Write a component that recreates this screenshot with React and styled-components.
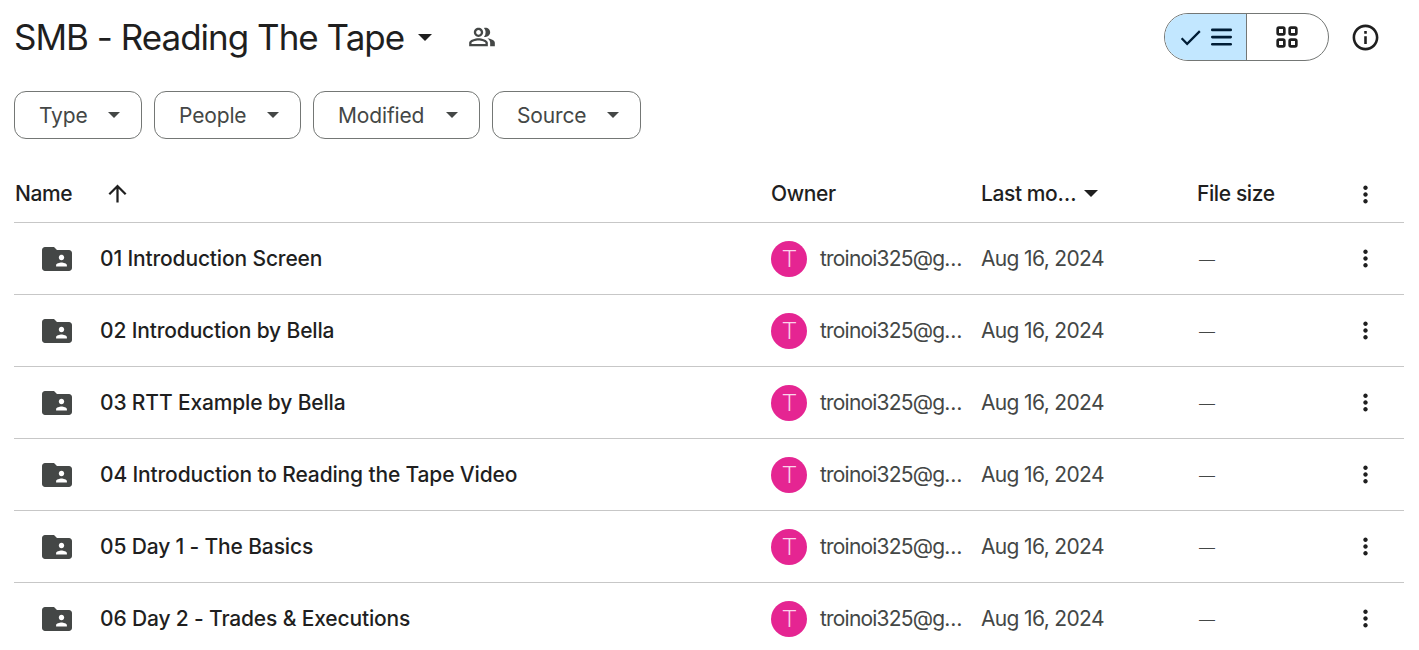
import React from 'react';
import styled, { createGlobalStyle } from 'styled-components';
import { MdOutlinePeopleAlt, MdInfoOutline, MdArrowUpward, MdMoreVert, MdCheck } from 'react-icons/md';

const GlobalStyle = createGlobalStyle`
  html, body {
    margin: 0;
    padding: 0;
    background: #fff;
    overflow: hidden;
    font-family: 'Inter', 'Roboto', sans-serif;
  }
`;

const Page = styled.div`
  width: 1419px;
  height: 650px;
  padding: 0 15px 0 14px;
  box-sizing: border-box;
  overflow: hidden;
`;

const TitleBar = styled.div`
  display: flex;
  align-items: center;
  height: 74px;
`;

const Title = styled.h1`
  margin: 0;
  font-size: 35px;
  font-weight: 400;
  color: #1f1f1f;
  letter-spacing: -1px;
  white-space: nowrap;
`;

const Caret = styled.span`
  display: inline-block;
  width: 0;
  height: 0;
  flex: none;
  border-left: ${({ $size }) => $size}px solid transparent;
  border-right: ${({ $size }) => $size}px solid transparent;
  border-top: ${({ $size }) => $size}px solid ${({ $color }) => $color};
`;

const TitleCaret = styled(Caret)`
  margin-left: 14px;
`;

const SharedIcon = styled(MdOutlinePeopleAlt)`
  margin-left: 36px;
  color: #444746;
`;

const Spacer = styled.div`
  flex: 1;
`;

const ViewToggle = styled.div`
  display: flex;
  width: 165px;
  height: 48px;
  box-sizing: border-box;
  border: 1px solid #747775;
  border-radius: 24px;
  overflow: hidden;
`;

const ListSegment = styled.div`
  width: 82px;
  display: flex;
  align-items: center;
  justify-content: center;
  gap: 7px;
  padding-right: 2px;
  background: #c2e7ff;
  border-right: 1px solid #747775;
  color: #001d35;
  box-sizing: border-box;
  flex: none;
`;

const GridSegment = styled.div`
  flex: 1;
  display: flex;
  align-items: center;
  justify-content: center;
  padding-right: 1px;
  color: #1f1f1f;
`;

const InfoButton = styled.div`
  width: 72px;
  display: flex;
  justify-content: center;
  color: #1f1f1f;
  margin-right: 3px;
`;

const Filters = styled.div`
  display: flex;
  gap: 12px;
  margin-top: 17px;
`;

const Chip = styled.div`
  display: flex;
  align-items: center;
  justify-content: space-between;
  width: ${({ $w }) => $w}px;
  height: 48px;
  box-sizing: border-box;
  padding: 0 21px 0 24px;
  border: 1px solid #747775;
  border-radius: 12px;
  font-size: 21px;
  letter-spacing: -0.15px;
  color: #444746;
`;

const Table = styled.div`
  margin-top: 27px;
`;

const Row = styled.div`
  display: grid;
  grid-template-columns: 757px 210px 216px 1fr 40px;
  align-items: center;
  height: ${({ $h }) => $h}px;
  border-bottom: 1px solid #c7c7c7;
  box-sizing: border-box;
  padding-right: 19px;
`;

const HeaderCell = styled.div`
  display: flex;
  align-items: center;
  font-size: 21px;
  font-weight: 500;
  letter-spacing: -0.4px;
  color: #1f1f1f;
  white-space: nowrap;
  margin-bottom: 2px;
`;

const NameHeader = styled(HeaderCell)`
  padding-left: 1px;
  gap: 32px;
`;

const SortCaret = styled(Caret)`
  margin-left: 8px;
`;

const NameCell = styled.div`
  display: flex;
  align-items: center;
  padding-left: 25px;
  gap: 25px;
  font-size: 21px;
  font-weight: 450;
  letter-spacing: -0.15px;
  color: #1f1f1f;
  white-space: nowrap;
`;

const OwnerCell = styled.div`
  display: flex;
  align-items: center;
  gap: 13px;
  font-size: 21px;
  letter-spacing: -0.8px;
  color: #444746;
  white-space: nowrap;
`;

const Avatar = styled.div`
  width: 36px;
  height: 36px;
  flex: none;
  border-radius: 50%;
  background: #e52592;
  color: #fbd3ea;
  display: flex;
  align-items: center;
  justify-content: center;
  font-family: 'Roboto', sans-serif;
  font-size: 24px;
  font-weight: 300;
`;

const DateCell = styled.div`
  font-size: 21px;
  letter-spacing: -0.65px;
  color: #444746;
  white-space: nowrap;
`;

const SizeCell = styled.div`
  font-size: 16px;
  font-weight: 300;
  color: #444746;
  padding-left: 2px;
`;

const MenuCell = styled.div`
  display: flex;
  justify-content: center;
  color: #1f1f1f;
`;

const FolderIcon = () => (
  <svg width="36" height="36" viewBox="0 0 24 24" fill="#444746">
    <path d="M20 6h-8l-2-2H4c-1.1 0-1.99.9-1.99 2L2 18c0 1.1.9 2 2 2h16c1.1 0 2-.9 2-2V8c0-1.1-.9-2-2-2zm-5 3.2c1 0 1.8.8 1.8 1.8s-.8 1.8-1.8 1.8-1.8-.8-1.8-1.8.8-1.8 1.8-1.8zm3.6 7.8h-7.2v-.9c0-1.2 2.4-1.8 3.6-1.8s3.6.6 3.6 1.8v.9z" />
  </svg>
);

const GridIcon = () => (
  <svg width="32" height="32" viewBox="0 0 24 24" fill="none" stroke="currentColor" strokeWidth="2">
    <rect x="5" y="5" width="5" height="5" rx="1" />
    <rect x="14" y="5" width="5" height="5" rx="1" />
    <rect x="5" y="14" width="5" height="5" rx="1" />
    <rect x="14" y="14" width="5" height="5" rx="1" />
  </svg>
);

const ListIcon = () => (
  <svg width="21" height="18" viewBox="0 0 21 18" fill="currentColor">
    <rect x="0" y="0.5" width="21" height="2.7" rx="1.3" />
    <rect x="0" y="7.7" width="21" height="2.7" rx="1.3" />
    <rect x="0" y="14.9" width="21" height="2.7" rx="1.3" />
  </svg>
);

const folders = [
  '01 Introduction Screen',
  '02 Introduction by Bella',
  '03 RTT Example by Bella',
  '04 Introduction to Reading the Tape Video',
  '05 Day 1 - The Basics',
  '06 Day 2 - Trades & Executions',
];

const filters = [
  { label: 'Type', width: 128 },
  { label: 'People', width: 147 },
  { label: 'Modified', width: 167 },
  { label: 'Source', width: 149 },
];

export default function App() {
  return (
    <Page>
      <GlobalStyle />
      <TitleBar>
        <Title>SMB - Reading The Tape</Title>
        <TitleCaret $size={7} $color="#1f1f1f" />
        <SharedIcon size={28} />
        <Spacer />
        <ViewToggle>
          <ListSegment>
            <MdCheck size={27} />
            <ListIcon />
          </ListSegment>
          <GridSegment>
            <GridIcon />
          </GridSegment>
        </ViewToggle>
        <InfoButton>
          <MdInfoOutline size={31} />
        </InfoButton>
      </TitleBar>

      <Filters>
        {filters.map((f) => (
          <Chip key={f.label} $w={f.width}>
            {f.label}
            <Caret $size={6} $color="#444746" />
          </Chip>
        ))}
      </Filters>

      <Table>
        <Row $h={57}>
          <NameHeader>
            Name
            <MdArrowUpward size={27} />
          </NameHeader>
          <HeaderCell>Owner</HeaderCell>
          <HeaderCell>
            Last mo…
            <SortCaret $size={7} $color="#1f1f1f" />
          </HeaderCell>
          <HeaderCell>File size</HeaderCell>
          <MenuCell>
            <MdMoreVert size={27} />
          </MenuCell>
        </Row>
        {folders.map((name) => (
          <Row key={name} $h={72}>
            <NameCell>
              <FolderIcon />
              {name}
            </NameCell>
            <OwnerCell>
              <Avatar>T</Avatar>
              troinoi325@g…
            </OwnerCell>
            <DateCell>Aug 16, 2024</DateCell>
            <SizeCell>—</SizeCell>
            <MenuCell>
              <MdMoreVert size={27} />
            </MenuCell>
          </Row>
        ))}
      </Table>
    </Page>
  );
}
